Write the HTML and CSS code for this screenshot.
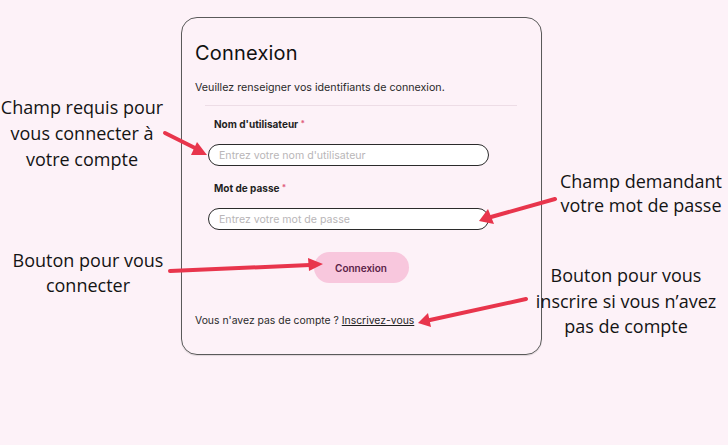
FILE: index.html
```html
<!DOCTYPE html>
<html lang="fr">
<head>
<meta charset="utf-8">
<title>Connexion</title>
<link rel="stylesheet" href="styles.css">
</head>
<body>
<div class="stage">
  <section class="card">
    <h1 class="title">Connexion</h1>
    <p class="subtitle">Veuillez renseigner vos identifiants de connexion.</p>
    <hr class="divider">
    <form class="form">
      <label class="label" for="user">Nom d'utilisateur <span class="req">*</span></label>
      <input class="input" id="user" type="text" placeholder="Entrez votre nom d'utilisateur">
      <label class="label label-second" for="pass">Mot de passe <span class="req">*</span></label>
      <input class="input" id="pass" type="password" placeholder="Entrez votre mot de passe">
    </form>
    <div class="actions">
      <button class="btn" type="button">Connexion</button>
    </div>
    <p class="footer">Vous n'avez pas de compte ? <a class="link" href="#">Inscrivez-vous</a></p>
  </section>

  <svg class="arrows" width="728" height="445" viewBox="0 0 728 445" aria-hidden="true">
    <g stroke="#e8354c" stroke-width="4" stroke-linecap="round" fill="none">
      <line x1="165" y1="133" x2="197" y2="149"/>
      <line x1="555" y1="199" x2="491" y2="217"/>
      <line x1="170" y1="271" x2="310" y2="265"/>
      <line x1="526" y1="299" x2="430" y2="320"/>
    </g>
    <g fill="#e8354c">
      <polygon points="207,155 191,155 197,142"/>
      <polygon points="479,221 488,209 494,224"/>
      <polygon points="323,264 309,271 308,258"/>
      <polygon points="418,323 428,313 431,327"/>
    </g>
  </svg>

  <p class="note note-1">Champ requis pour<br>vous connecter à<br>votre compte</p>
  <p class="note note-2">Bouton pour vous<br>connecter</p>
  <p class="note note-3">Champ demandant<br>votre mot de passe</p>
  <p class="note note-4">Bouton pour vous<br>inscrire si vous n’avez<br>pas de compte</p>
</div>
</body>
</html>
```

FILE: styles.css
```css
* { box-sizing: border-box; }

html, body {
  margin: 0;
  padding: 0;
  background: #fdf2f8;
}

body {
  font-family: "Inter", "Liberation Sans", sans-serif;
  color: #1c1c1c;
}

.stage {
  position: relative;
  width: 728px;
  height: 445px;
  padding: 17px 0 0 181px;
  overflow: hidden;
}

.card {
  width: 361px;
  height: 338px;
  border: 1px solid #5a5a5a;
  border-radius: 16px;
  padding: 20px 14px 0 13px;
  display: flex;
  flex-direction: column;
  box-shadow: 0 1px 1px rgba(0,0,0,0.12);
}

.title {
  margin: 0;
  font-size: 20px;
  line-height: 30px;
  font-weight: 400;
  letter-spacing: 0.2px;
  color: #111;
}

.subtitle {
  margin: 13px 0 0;
  font-size: 10.7px;
  line-height: 14px;
  color: #2a2a2a;
}

.divider {
  margin: 10px 10px 0 10px;
  border: 0;
  border-top: 1px solid #eddde6;
  height: 0;
}

.form {
  display: flex;
  flex-direction: column;
  margin: 10px 0 0 13px;
  width: 281px;
}

.label {
  padding-left: 6px;
  font-size: 10px;
  line-height: 14px;
  font-weight: 700;
  color: #1f1f1f;
}

.label-second {
  margin-top: 14px;
}

.req {
  color: #e0607e;
  font-size: 8px;
  vertical-align: 2px;
}

.input {
  margin-top: 13px;
  height: 22px;
  width: 281px;
  border: 1px solid #2b2b2b;
  border-radius: 11px;
  background: #fff;
  padding: 0 10px;
  font-family: inherit;
  font-size: 10.6px;
  color: #222;
  outline: none;
}

.input::placeholder {
  color: #b9b6b8;
}

.actions {
  display: flex;
  justify-content: center;
  margin-top: 22px;
}

.btn {
  width: 95px;
  height: 31px;
  border: 0;
  border-radius: 16px;
  background: #f8c7dd;
  color: #5b1e48;
  font-family: inherit;
  font-size: 10px;
  font-weight: 600;
  cursor: pointer;
}

.footer {
  margin: 31px 0 0;
  font-size: 10.4px;
  line-height: 14px;
  color: #2a2a2a;
}

.link {
  color: #1f1f1f;
  text-decoration: underline;
}

.arrows {
  position: absolute;
  left: 0;
  top: 0;
}

.note {
  position: absolute;
  margin: 0;
  font-family: "Open Sans", "Noto Sans", sans-serif;
  font-size: 18px;
  color: #141414;
  text-align: center;
  white-space: nowrap;
}

.note-1 { left: 0; width: 164px; top: 94px; line-height: 26px; }
.note-2 { left: 8px; width: 160px; top: 248px; line-height: 25px; }
.note-3 { left: 556px; width: 170px; top: 169px; line-height: 24px; }
.note-4 { left: 526px; width: 200px; top: 263px; line-height: 25.5px; }
```
